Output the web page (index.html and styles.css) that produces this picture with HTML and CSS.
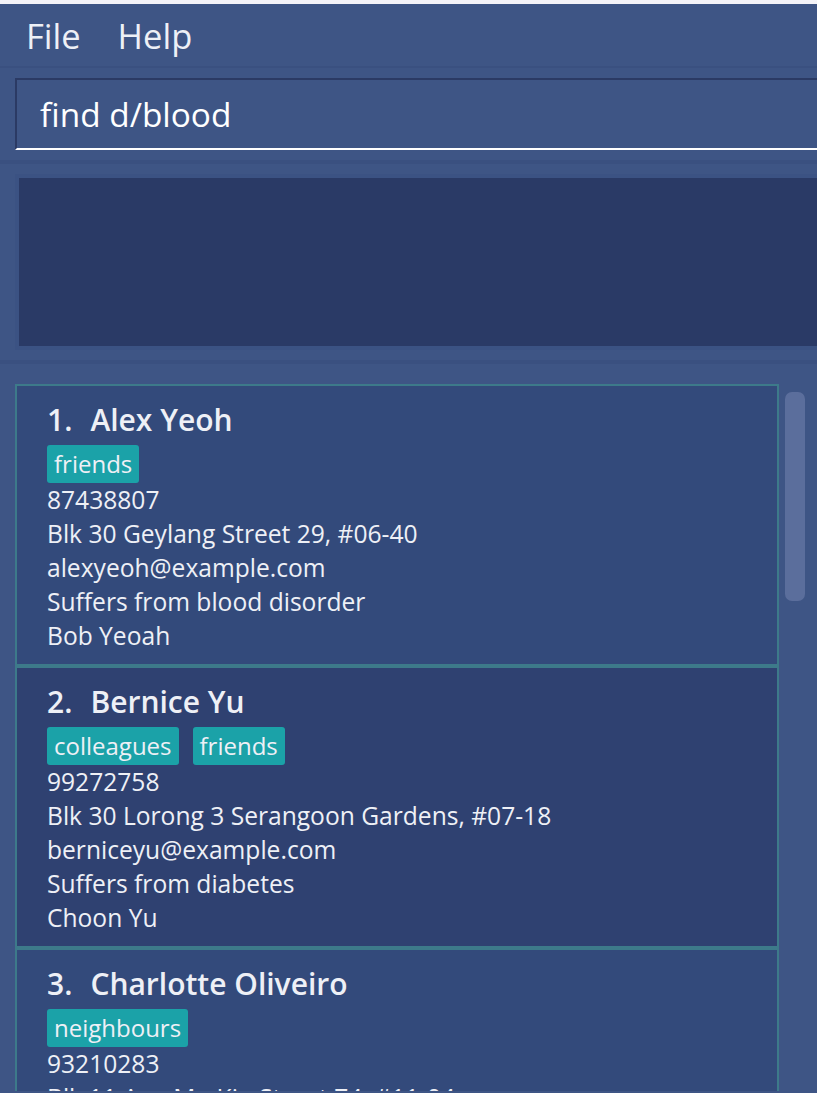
FILE: index.html
```html
<!DOCTYPE html>
<html>
<head>
<meta charset="utf-8">
<link rel="stylesheet" href="styles.css">
</head>
<body>
<div class="top-strip"></div>
<div class="menubar">
  <span class="menu-item">File</span>
  <span class="menu-item">Help</span>
</div>
<div class="command-section">
  <div class="command-box">find d/blood</div>
</div>
<div class="result-section">
  <div class="result-box"></div>
</div>
<div class="list-section">
  <div class="list">
    <div class="card odd">
      <div class="name"><span class="idx">1.</span><span>Alex Yeoh</span></div>
      <div class="tags"><span class="tag">friends</span></div>
      <div class="line">87438807</div>
      <div class="line">Blk 30 Geylang Street 29, #06-40</div>
      <div class="line">alexyeoh@example.com</div>
      <div class="line">Suffers from blood disorder</div>
      <div class="line">Bob Yeoah</div>
    </div>
    <div class="card even">
      <div class="name"><span class="idx">2.</span><span>Bernice Yu</span></div>
      <div class="tags"><span class="tag">colleagues</span><span class="tag">friends</span></div>
      <div class="line">99272758</div>
      <div class="line">Blk 30 Lorong 3 Serangoon Gardens, #07-18</div>
      <div class="line">berniceyu@example.com</div>
      <div class="line">Suffers from diabetes</div>
      <div class="line">Choon Yu</div>
    </div>
    <div class="card odd">
      <div class="name"><span class="idx">3.</span><span>Charlotte Oliveiro</span></div>
      <div class="tags"><span class="tag">neighbours</span></div>
      <div class="line">93210283</div>
      <div class="line">Blk 11 Ang Mo Kio Street 74, #11-04</div>
      <div class="line">charlotte@example.com</div>
      <div class="line">Allergic to nuts</div>
      <div class="line">Oliver Oliveiro</div>
    </div>
  </div>
  <div class="scroll-track"><div class="scroll-thumb"></div></div>
</div>
</body>
</html>
```
FILE: styles.css
```css
html, body {
  margin: 0;
  padding: 0;
}
body {
  background: #3e5585;
  font-family: "Open Sans", "Noto Sans", sans-serif;
  color: #eef0f6;
  width: 817px;
  height: 1093px;
  overflow: hidden;
}
.top-strip {
  height: 4px;
  background: #f4f3f8;
}
.menubar {
  display: flex;
  align-items: center;
  gap: 37px;
  padding-left: 26px;
  font-size: 34.5px;
  border-bottom: 2px solid #3a5080;
  box-sizing: border-box;
  height: 64px;
}
.command-section {
  padding: 10px 0 10px 15px;
  border-bottom: 4px solid #3a5080;
}
.command-box {
  height: 68px;
  border-top: 2px solid #2b3a64;
  border-left: 2px solid #2b3a64;
  border-bottom: 2px solid #ffffff;
  padding-left: 23px;
  font-size: 33.4px;
  line-height: 68px;
  color: #ffffff;
}
.result-section {
  padding: 10px 0 10px 15px;
  border-bottom: 4px solid #3a5080;
}
.result-box {
  height: 168px;
  border: 4px solid #3b5283;
  border-right: none;
  background: #2a3a66;
}
.list-section {
  display: flex;
  gap: 6px;
  padding: 20px 0 0 15px;
  height: 707px;
  overflow: hidden;
}
.list {
  width: 764px;
  display: flex;
  flex-direction: column;
  flex-shrink: 0;
}
.card {
  border: 2px solid #3d7a8a;
  padding: 16px 0 11px 30px;
  flex-shrink: 0;
}
.card.odd { background: #334a7b; }
.card.even { background: #2f4171; }
.name {
  font-size: 30px;
  font-weight: 600;
  line-height: 36px;
  display: flex;
}
.idx {
  margin-right: 18px;
}
.tags {
  display: flex;
  gap: 14px;
  margin-top: 7px;
}
.tag {
  background: #1ba2a8;
  border-radius: 3px;
  font-size: 24px;
  line-height: 30px;
  padding: 4px 7px;
}
.line {
  font-size: 24.6px;
  line-height: 34px;
  white-space: nowrap;
}
.scroll-track {
  width: 20px;
  padding-top: 8px;
}
.scroll-thumb {
  height: 209px;
  background: #5b6e9c;
  border-radius: 7px;
}
```
